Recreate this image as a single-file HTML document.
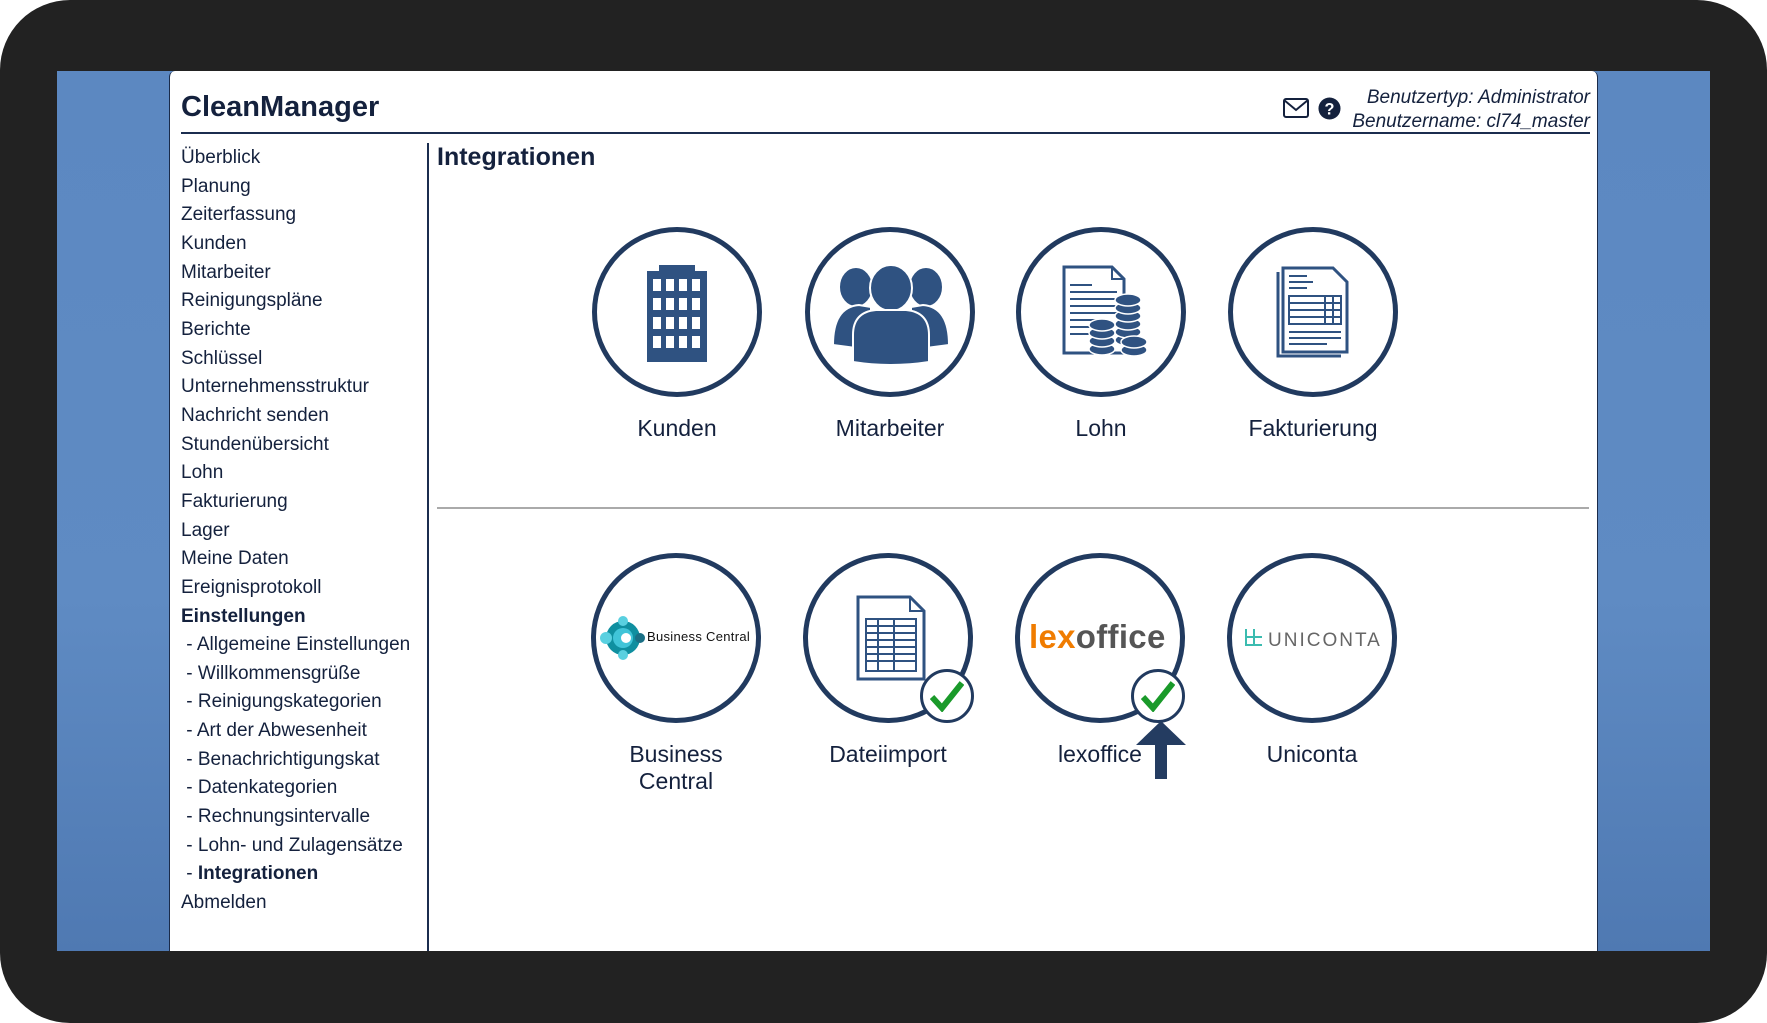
<!DOCTYPE html>
<html><head><meta charset="utf-8"><style>
*{margin:0;padding:0;box-sizing:border-box}
html,body{width:1767px;height:1023px;overflow:hidden;background:#fff}
body{font-family:"Liberation Sans",sans-serif;color:#14213d;position:relative}
#frame{position:absolute;left:0;top:0;width:1767px;height:1023px;background:#222;border-radius:70px}
#blue{position:absolute;left:57px;top:71px;width:1653px;height:880px;background:linear-gradient(180deg,#5c88c1 0%,#5f8bc3 60%,#4f79b2 100%)}
#panel{position:absolute;left:169px;top:71px;width:1429px;height:880px;background:#fff;border-radius:6px 6px 0 0;border-left:1px solid #1a2b4a;border-right:1px solid #1a2b4a}
.a{position:absolute;white-space:nowrap}
#title{left:181px;top:91px;font-size:29px;font-weight:bold}
#hline{position:absolute;left:181px;top:132px;width:1409px;height:2px;background:#1b2d4f}
#user{right:177px;top:86px;text-align:right;font-style:italic;font-size:19px;line-height:24px}
#nav{left:181px;top:144px;font-size:19px;line-height:28.65px}
#vline{position:absolute;left:427px;top:143px;width:2px;height:808px;background:#1b2d4f}
#h1{left:437px;top:143px;font-size:25px;font-weight:bold}
#hr{position:absolute;left:437px;top:507px;width:1152px;height:2px;background:#aaa}
.c{position:absolute;width:170px;height:170px;border:5px solid #213a5f;border-radius:50%;background:#fff}
.lbl{position:absolute;width:220px;text-align:center;font-size:23px;line-height:27px}
.chk{position:absolute;width:54px;height:54px;border:3px solid #213a5f;border-radius:50%;background:#fff}
</style></head><body>
<div id="frame"></div>
<div id="blue"></div>
<div id="panel"></div>
<div class="a" id="title">CleanManager</div>
<div class="a" id="user">Benutzertyp: Administrator<br>Benutzername: cl74_master</div>
<svg class="a" style="left:1283px;top:98px" width="26" height="20" viewBox="0 0 26 20"><rect x="1" y="1" width="24" height="18" rx="2" fill="none" stroke="#14213d" stroke-width="2"/><path d="M1 2 L13 12 L25 2" fill="none" stroke="#14213d" stroke-width="2"/></svg>
<svg class="a" style="left:1318px;top:97px" width="23" height="23" viewBox="0 0 24 24"><circle cx="12" cy="12" r="11.5" fill="#14213d"/><text x="12" y="18" text-anchor="middle" font-family="Liberation Sans" font-weight="bold" font-size="17" fill="#fff">?</text></svg>
<div id="hline"></div>
<div class="a" id="nav">Überblick<br>Planung<br>Zeiterfassung<br>Kunden<br>Mitarbeiter<br>Reinigungspläne<br>Berichte<br>Schlüssel<br>Unternehmensstruktur<br>Nachricht senden<br>Stundenübersicht<br>Lohn<br>Fakturierung<br>Lager<br>Meine Daten<br>Ereignisprotokoll<br><b>Einstellungen</b><br>&nbsp;- Allgemeine Einstellungen<br>&nbsp;- Willkommensgrüße<br>&nbsp;- Reinigungskategorien<br>&nbsp;- Art der Abwesenheit<br>&nbsp;- Benachrichtigungskat<br>&nbsp;- Datenkategorien<br>&nbsp;- Rechnungsintervalle<br>&nbsp;- Lohn- und Zulagensätze<br>&nbsp;- <b>Integrationen</b><br>Abmelden</div>
<div id="vline"></div>
<div class="a" id="h1">Integrationen</div>

<div class="c" style="left:592px;top:227px"></div>
<svg class="a" style="left:647px;top:265px" width="60" height="97" viewBox="0 0 60 97"><rect x="12" y="0" width="36" height="8" fill="#2f5281"/><rect x="0" y="6" width="60" height="91" fill="#2f5281"/><g fill="#fff"><rect x="6" y="14" width="8" height="12"/><rect x="19" y="14" width="8" height="12"/><rect x="32" y="14" width="8" height="12"/><rect x="45" y="14" width="8" height="12"/><rect x="6" y="33" width="8" height="12"/><rect x="19" y="33" width="8" height="12"/><rect x="32" y="33" width="8" height="12"/><rect x="45" y="33" width="8" height="12"/><rect x="6" y="52" width="8" height="12"/><rect x="19" y="52" width="8" height="12"/><rect x="32" y="52" width="8" height="12"/><rect x="45" y="52" width="8" height="12"/><rect x="6" y="71" width="8" height="12"/><rect x="19" y="71" width="8" height="12"/><rect x="32" y="71" width="8" height="12"/><rect x="45" y="71" width="8" height="12"/></g></svg>
<div class="lbl" style="left:567px;top:415px">Kunden</div>

<div class="c" style="left:805px;top:227px"></div>
<svg class="a" style="left:831px;top:265px" width="120" height="100" viewBox="0 0 120 100"><g fill="#2f5281" stroke="#fff" stroke-width="2"><ellipse cx="25" cy="22" rx="17" ry="20"/><ellipse cx="95" cy="22" rx="17" ry="20"/><path d="M2 80 Q2 42 28 40 L40 42 L40 85 Z"/><path d="M118 80 Q118 42 92 40 L80 42 L80 85 Z"/><ellipse cx="60" cy="23" rx="21" ry="23"/><path d="M22 97 L22 70 Q22 47 45 45 L75 45 Q98 47 98 70 L98 97 Q60 103 22 97Z"/></g></svg>
<div class="lbl" style="left:780px;top:415px">Mitarbeiter</div>

<div class="c" style="left:1016px;top:227px"></div>
<svg class="a" style="left:1062px;top:265px" width="86" height="95" viewBox="0 0 86 95"><path d="M2 2 L50 2 L62 14 L62 88 L2 88 Z" fill="#fff" stroke="#2f5281" stroke-width="3"/><path d="M50 2 L50 14 L62 14" fill="none" stroke="#2f5281" stroke-width="2"/><g stroke="#2f5281" stroke-width="2"><line x1="8" y1="20" x2="30" y2="20"/><line x1="8" y1="27" x2="55" y2="27"/><line x1="8" y1="34" x2="55" y2="34"/><line x1="8" y1="41" x2="55" y2="41"/><line x1="8" y1="48" x2="55" y2="48"/><line x1="8" y1="55" x2="45" y2="55"/><line x1="8" y1="62" x2="40" y2="62"/><line x1="8" y1="69" x2="30" y2="69"/></g><g fill="#2f5281" stroke="#fff" stroke-width="1.5"><ellipse cx="66" cy="75" rx="13" ry="6"/><ellipse cx="66" cy="67" rx="13" ry="6"/><ellipse cx="66" cy="59" rx="13" ry="6"/><ellipse cx="66" cy="51" rx="13" ry="6"/><ellipse cx="66" cy="43" rx="13" ry="6"/><ellipse cx="66" cy="35" rx="13" ry="6"/><ellipse cx="40" cy="84" rx="13" ry="6"/><ellipse cx="40" cy="76" rx="13" ry="6"/><ellipse cx="40" cy="68" rx="13" ry="6"/><ellipse cx="40" cy="60" rx="13" ry="6"/><ellipse cx="72" cy="85" rx="13" ry="6"/><ellipse cx="72" cy="77" rx="13" ry="6"/></g></svg>
<div class="lbl" style="left:991px;top:415px">Lohn</div>

<div class="c" style="left:1228px;top:227px"></div>
<svg class="a" style="left:1275px;top:266px" width="76" height="92" viewBox="0 0 76 92"><path d="M3 6 L3 90 L66 90" fill="none" stroke="#2f5281" stroke-width="3"/><path d="M8 2 L58 2 L72 16 L72 86 L8 86 Z" fill="#fff" stroke="#2f5281" stroke-width="3"/><g stroke="#2f5281" stroke-width="2" fill="none"><line x1="14" y1="10" x2="32" y2="10"/><line x1="14" y1="16" x2="38" y2="16"/><line x1="14" y1="22" x2="32" y2="22"/><rect x="14" y="30" width="52" height="28"/><line x1="14" y1="37" x2="66" y2="37"/><line x1="14" y1="44" x2="66" y2="44"/><line x1="14" y1="51" x2="66" y2="51"/><line x1="50" y1="30" x2="50" y2="58"/><line x1="58" y1="30" x2="58" y2="58"/><line x1="14" y1="66" x2="66" y2="66"/><line x1="14" y1="72" x2="66" y2="72"/><line x1="14" y1="78" x2="52" y2="78"/></g></svg>
<div class="lbl" style="left:1203px;top:415px">Fakturierung</div>

<div id="hr"></div>

<div class="c" style="left:591px;top:553px"></div>
<svg class="a" style="left:600px;top:615px" width="46" height="46" viewBox="0 0 46 46"><circle cx="23" cy="23" r="17" fill="#0f8fa0"/><circle cx="23" cy="23" r="10" fill="#40c4d8"/><circle cx="26" cy="23" r="5" fill="#fff"/><circle cx="6" cy="23" r="6" fill="#59d0e0"/><circle cx="23" cy="6" r="5" fill="#59d0e0"/><circle cx="23" cy="40" r="5" fill="#59d0e0"/><circle cx="40" cy="23" r="5" fill="#1a6f85"/></svg>
<div class="a" style="left:647px;top:629px;font-size:13px;color:#111;letter-spacing:0.3px">Business Central</div>
<div class="lbl" style="left:566px;top:741px">Business<br>Central</div>

<div class="c" style="left:803px;top:553px"></div>
<svg class="a" style="left:856px;top:595px" width="70" height="86" viewBox="0 0 70 86"><path d="M2 2 L54 2 L68 16 L68 84 L2 84 Z" fill="#fff" stroke="#2f5281" stroke-width="3"/><path d="M54 2 L54 16 L68 16" fill="none" stroke="#2f5281" stroke-width="2"/><g stroke="#2f5281" stroke-width="2" fill="none"><rect x="10" y="24" width="50" height="52"/><line x1="10" y1="31" x2="60" y2="31"/><line x1="10" y1="38" x2="60" y2="38"/><line x1="10" y1="45" x2="60" y2="45"/><line x1="10" y1="52" x2="60" y2="52"/><line x1="10" y1="59" x2="60" y2="59"/><line x1="10" y1="66" x2="60" y2="66"/><line x1="22" y1="24" x2="22" y2="76"/><line x1="38" y1="24" x2="38" y2="76"/></g></svg>
<div class="chk" style="left:920px;top:669px"></div>
<svg class="a" style="left:930px;top:680px" width="34" height="32" viewBox="0 0 34 32"><path d="M2 17 L12 28 L32 3" fill="none" stroke="#1a9a2a" stroke-width="6"/></svg>
<div class="lbl" style="left:778px;top:741px">Dateiimport</div>

<div class="c" style="left:1015px;top:553px"></div>
<div class="a" style="left:1029px;top:618px;font-size:33px;font-weight:bold;letter-spacing:0.3px"><span style="color:#f07c00">lex</span><span style="color:#555">office</span></div>
<div class="chk" style="left:1131px;top:669px"></div>
<svg class="a" style="left:1141px;top:680px" width="34" height="32" viewBox="0 0 34 32"><path d="M2 17 L12 28 L32 3" fill="none" stroke="#1a9a2a" stroke-width="6"/></svg>
<div class="lbl" style="left:990px;top:741px">lexoffice</div>
<svg class="a" style="left:1136px;top:721px" width="50" height="58" viewBox="0 0 50 58"><path d="M25 0 L50 24 L31 24 L31 58 L19 58 L19 24 L0 24 Z" fill="#243c61"/></svg>

<div class="c" style="left:1227px;top:553px"></div>
<svg class="a" style="left:1242px;top:627px" width="22" height="22" viewBox="0 0 22 22"><path d="M4 2 L4 18 L20 18 M12 2 L12 18 M4 10 L20 10" fill="none" stroke="#3bbcb0" stroke-width="2"/></svg>
<div class="a" style="left:1268px;top:630px;font-size:19px;letter-spacing:2px;color:#666">UNICONTA</div>
<div class="lbl" style="left:1202px;top:741px">Uniconta</div>
</body></html>
